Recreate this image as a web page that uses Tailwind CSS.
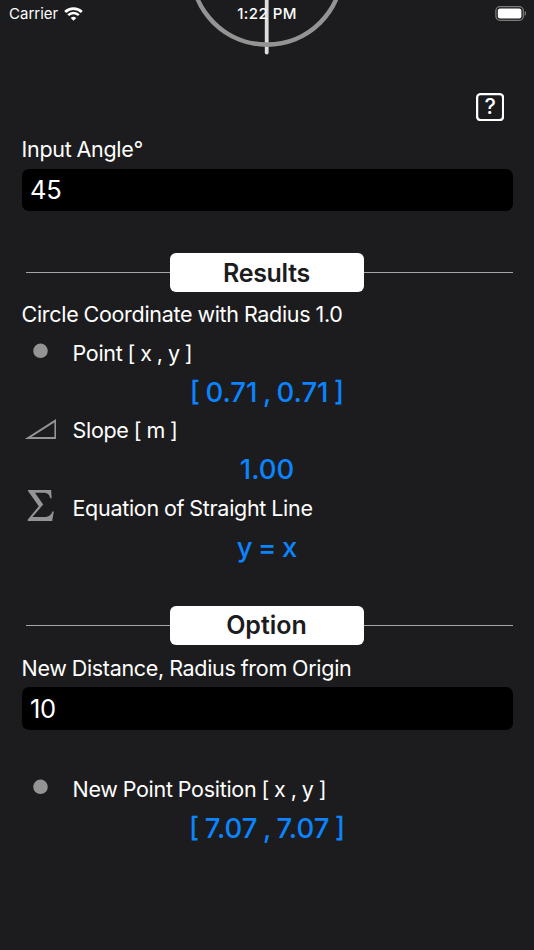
<!DOCTYPE html>
<html lang="en">

<head>
    <meta charset="UTF-8">
    <meta name="viewport" content="width=device-width, initial-scale=1.0">
    <title>Circle Coordinate</title>
    <script src="https://cdn.jsdelivr.net/npm/@tailwindcss/browser@4"></script>
</head>

<body class="bg-[#1c1c1e] text-white font-['Inter','Liberation_Sans',sans-serif] h-[950px] overflow-hidden">
    <div class="relative w-[534px] h-full">
        <!-- Circle drawing that runs off the top of the screen -->
        <svg class="absolute left-0 top-0" width="534" height="60" viewBox="0 0 534 60" fill="none">
            <path d="M266.7 -5V52.5" stroke="#dedede" stroke-width="3.8" stroke-linecap="round" />
            <circle cx="266.9" cy="-30.8" r="75.4" stroke="#949494" stroke-width="4.6" />
        </svg>

        <!-- Status bar -->
        <header class="relative h-7 grid grid-cols-3 items-center pl-[9px] pr-[7px] text-[15px]">
            <div class="flex items-center gap-[6px]">
                <span>Carrier</span>
                <svg width="19" height="15" viewBox="0 0 19 15" fill="none" stroke="#fff">
                    <path d="M1.2 4.9A12 12 0 0 1 17.8 4.9" stroke-width="2.8" />
                    <path d="M4.2 8.1A7.6 7.6 0 0 1 14.8 8.1" stroke-width="2.6" />
                    <path d="M9.5 13.8L6.7 11A4 4 0 0 1 12.3 11Z" fill="#fff" stroke="none" />
                </svg>
            </div>
            <div class="-ml-[2px] text-center font-medium tracking-[0.45px]">1:22 PM</div>
            <div class="-mt-px flex justify-end">
                <svg width="32" height="15" viewBox="0 0 32 15" fill="none">
                    <rect x="0.9" y="0.7" width="27.4" height="13.6" rx="4" stroke="#7b7b7c" stroke-width="1.3" />
                    <rect x="2.8" y="2.6" width="23.6" height="9.8" rx="2.2" fill="#fff" />
                    <path d="M29.7 5.1C31.6 5.7 31.6 9.3 29.7 9.9Z" fill="#7b7b7c" />
                </svg>
            </div>
        </header>

        <main class="px-[21.5px] text-[21.5px] tracking-[-0.3px] [word-spacing:-0.6px]">
            <div class="flex justify-end pt-[65px] pr-[8.5px]">
                <button class="relative flex size-[28px] items-center justify-center text-[21.5px] leading-none font-medium">
                    <svg class="absolute inset-0" width="28" height="28" viewBox="0 0 28 28" fill="none"><rect x="1.1" y="1.1" width="26" height="26" rx="3.5" stroke="#fff" stroke-width="2.3" /></svg>
                    <span>?</span>
                </button>
            </div>

            <label class="flex h-[47.5px] items-center pt-[8px]">Input Angle°</label>
            <div class="flex h-[42.5px] w-[491px] items-center rounded-[7px] bg-black pl-[8.5px] text-[25.5px]">45</div>

            <!-- Results -->
            <div class="mt-[42px] flex items-center pl-[4.5px]">
                <div class="h-[1.5px] flex-1 bg-[#a5a5a5]"></div>
                <h2 class="flex h-[39px] w-[194px] items-center justify-center rounded-[6px] bg-white pt-[2px] text-[25px] font-semibold text-[#1c1c1e]">Results</h2>
                <div class="h-[1.5px] w-[149px] bg-[#a5a5a5]"></div>
            </div>
            <p class="flex h-[42px] items-center pt-[3px]">Circle Coordinate with Radius 1.0</p>

            <div class="grid auto-rows-[38.7px] items-center">
                <div class="flex items-center">
                    <svg class="mr-[19px] -mt-1" width="32" height="32" viewBox="0 0 32 32"><circle cx="18.5" cy="15.8" r="7.3" fill="#949494" /></svg>
                    <span>Point [ x , y ]</span>
                </div>
                <div class="pt-[2px] text-center text-[27.5px] font-medium tracking-normal text-[#0a84ff] [word-spacing:-1.8px]">[ 0.71 , 0.71 ]</div>
                <div class="flex items-center">
                    <svg class="mr-[17px] -mt-1" width="34" height="32" viewBox="0 0 34 32"><path d="M6.2 25H33.4V7.6Z" fill="none" stroke="#949494" stroke-width="2" /></svg>
                    <span class="-mt-px">Slope [ m ]</span>
                </div>
                <div class="pt-px text-center text-[27.5px] font-medium tracking-normal text-[#0a84ff]">1.00</div>
                <div class="flex items-center">
                    <svg class="mr-[17px] -mt-1" width="34" height="34" viewBox="0 0 34 34"><path d="M6 1H29.2L29.6 9.3H28.2C27.4 5.4 25.5 3.8 21 3.8H13L21.2 15.6L10.4 28H22C26.5 28 28.8 26.5 30.4 22.5H31.8L30.2 32H5.8V30.5L16.8 17.2L6 2Z" fill="#949494" /></svg>
                    <span>Equation of Straight Line</span>
                </div>
                <div class="pt-[2px] text-center text-[27.5px] font-medium tracking-normal text-[#0a84ff] [word-spacing:-1.8px]">y = x</div>
            </div>

            <!-- Option -->
            <div class="mt-[40px] flex items-center pl-[4.5px]">
                <div class="h-[1.5px] flex-1 bg-[#a5a5a5]"></div>
                <h2 class="flex h-[39px] w-[194px] items-center justify-center rounded-[6px] bg-white pt-px text-[25px] font-semibold tracking-normal text-[#1c1c1e]">Option</h2>
                <div class="h-[1.5px] w-[149px] bg-[#a5a5a5]"></div>
            </div>
            <label class="flex h-[42px] items-center pt-[3px]">New Distance, Radius from Origin</label>
            <div class="flex h-[42.5px] w-[491px] items-center rounded-[7px] bg-black pt-px pl-[8.5px] text-[25.5px]">10</div>

            <div class="mt-[40px] grid auto-rows-[38.7px] items-center">
                <div class="flex items-center">
                    <svg class="mr-[19px] -mt-1" width="32" height="32" viewBox="0 0 32 32"><circle cx="18.5" cy="15.8" r="7.3" fill="#949494" /></svg>
                    <span>New Point Position [ x , y ]</span>
                </div>
                <div class="pt-[2px] text-center text-[27.5px] font-medium tracking-normal text-[#0a84ff] [word-spacing:-1.8px]">[ 7.07 , 7.07 ]</div>
            </div>
        </main>
    </div>
</body>

</html>
